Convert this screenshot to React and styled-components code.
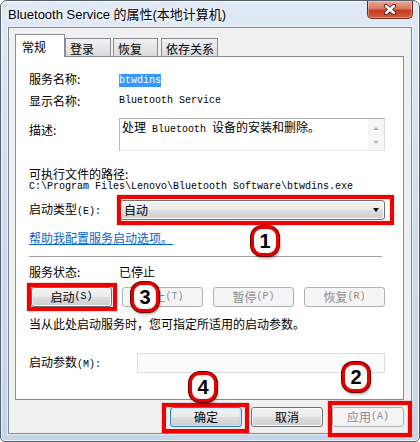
import React from 'react'
import styled, { createGlobalStyle } from 'styled-components'

const GlobalStyle = createGlobalStyle`
  body {
    margin: 0;
    background: #fff;
  }
`

const Page = styled.div`
  position: relative;
  width: 420px;
  height: 442px;
  font-family: "Noto Sans CJK SC", "Liberation Sans", sans-serif;
  font-size: 12px;
  color: #000;
`

const Window = styled.div`
  box-sizing: border-box;
  width: 420px;
  height: 442px;
  display: flex;
  flex-direction: column;
  border: 1px solid #56616d;
  border-radius: 7px 7px 5px 5px;
  background: linear-gradient(180deg, #e0eaf5 0%, #d2e0ef 35%, #c5d6e9 100%);
  box-shadow: inset 0 0 0 1px rgba(255, 255, 255, 0.7);
`

const TitleBar = styled.div`
  height: 26px;
  flex: none;
  display: flex;
  justify-content: space-between;
  align-items: flex-start;
  padding: 0 6px 0 7px;
`

const Title = styled.span`
  font-family: "Liberation Sans", "Noto Sans CJK SC", sans-serif;
  font-size: 13px;
  line-height: 26px;
  padding-top: 1px;
  text-shadow: 0 0 6px #fff, 0 0 3px #fff;
`

const CloseButton = styled.div`
  box-sizing: border-box;
  width: 46px;
  height: 18px;
  border: 1px solid #6b2a1f;
  border-top: none;
  border-radius: 0 0 5px 5px;
  background: linear-gradient(180deg, #eaa795 0%, #da765f 45%, #c33a1d 55%, #d35c3d 100%);
  box-shadow: inset 0 0 0 1px rgba(255, 255, 255, 0.35);
  display: flex;
  align-items: center;
  justify-content: center;
`

const Client = styled.div`
  flex: 1;
  margin: 0 7px 7px;
  border: 1px solid #7d8995;
  background: #f0f0f0;
  padding: 6px 7px 6px 6px;
  display: flex;
  flex-direction: column;
  box-shadow: 0 0 0 1px rgba(255, 255, 255, 0.55);
`

const TabStrip = styled.div`
  display: flex;
  align-items: flex-end;
  height: 22px;
  flex: none;
`

const Tab = styled.div`
  box-sizing: border-box;
  position: relative;
  z-index: ${p => (p.$active ? 1 : 0)};
  width: ${p => p.$w}px;
  margin-left: ${p => p.$gap || 0}px;
  height: ${p => (p.$active ? 23 : 18)}px;
  margin-bottom: ${p => (p.$active ? -1 : 0)}px;
  border: 1px solid #898c95;
  border-bottom: none;
  padding: ${p => (p.$active ? '0 0 0 6px' : '2px 0 0 4px')};
  display: flex;
  align-items: center;
  background: ${p => (p.$active ? '#fff' : 'linear-gradient(180deg, #f2f2f2 0%, #e6e6e6 50%, #dadada 100%)')};
`

const Panel = styled.div`
  flex: 1;
  border: 1px solid #898c95;
  background: #fff;
  padding: 13px 18px 0 13px;
  display: flex;
  flex-direction: column;
`

const Row = styled.div`
  display: grid;
  grid-template-columns: ${p => p.$label || 90}px 1fr;
  align-items: ${p => p.$align || 'center'};
  margin-top: ${p => p.$top || 0}px;
  line-height: 16px;
`

const Label = styled.span`
  padding-top: ${p => p.$pad || 0}px;
`

const Latin = styled.span`
  font-family: "Liberation Mono", monospace;
  font-size: 10px;
  white-space: pre;
`

const Selected = styled(Latin)`
  display: inline-block;
  background: #3399ff;
  color: #fff;
  line-height: 13px;
`

const Text = styled.div`
  margin-top: ${p => p.$top || 0}px;
  line-height: ${p => p.$line || 16}px;
`

const PathText = styled.div`
  font-family: "Liberation Mono", monospace;
  font-size: 10px;
  line-height: 11px;
`

const TextBox = styled.div`
  box-sizing: border-box;
  height: 33px;
  display: flex;
  border: 1px solid #abadb3;
  border-color: #abadb3 #dbdfe6 #e3e9ef #b5b8c0;
  background: #fff;
`

const TextBoxBody = styled.div`
  flex: 1;
  padding: 0 2px;
`

const ScrollBar = styled.div`
  width: 16px;
  background: #f6f6f6;
  display: flex;
  flex-direction: column;
  align-items: center;
  justify-content: space-between;
  padding: 8px 0 6px;
  box-sizing: border-box;
`

const Arrow = styled.span`
  width: 0;
  height: 0;
  border-left: ${p => p.$size || 3}px solid transparent;
  border-right: ${p => p.$size || 3}px solid transparent;
  ${p => (p.$up ? 'border-bottom' : 'border-top')}: ${p => (p.$size ? p.$size + 1 : 3)}px solid ${p => p.$color || '#b4b4b4'};
`

const ComboBox = styled.div`
  box-sizing: border-box;
  height: 20px;
  margin-left: 1px;
  border: 1px solid #707070;
  border-radius: 3px;
  background: linear-gradient(180deg, #f2f2f2 0%, #ebebeb 49%, #dddddd 50%, #cfcfcf 100%);
  box-shadow: inset 0 0 0 1px #fafafa;
  display: flex;
  align-items: center;
  justify-content: space-between;
  padding: 0 5px 0 3px;
`

const Link = styled.div`
  margin-top: 10px;
  line-height: 16px;
  color: #0066cc;
  text-decoration: underline;
`

const Separator = styled.div`
  margin-top: 10px;
  height: 1px;
  margin-right: 3px;
  background: #a0a0a0;
`

const ButtonRow = styled.div`
  display: grid;
  grid-template-columns: repeat(4, 81px);
  gap: 10px;
  padding-left: 2px;
  margin-top: 7px;
`

const Button = styled.div`
  box-sizing: border-box;
  height: 20px;
  border: 1px solid ${p => (p.$disabled ? '#adb2b5' : p.$primary ? '#3c7fb1' : '#707070')};
  border-radius: 3px;
  background: ${p => (p.$disabled ? '#f4f4f4' : 'linear-gradient(180deg, #f2f2f2 0%, #ebebeb 49%, #dddddd 50%, #cfcfcf 100%)')};
  box-shadow: ${p => (p.$disabled ? 'none' : p.$primary ? 'inset 0 0 0 1px #bfe6fa, inset 0 0 3px #8fd0f0' : 'inset 0 0 0 1px #fcfcfc')};
  color: ${p => (p.$disabled ? '#8d8d8d' : '#000')};
  display: flex;
  align-items: center;
  justify-content: center;
  line-height: 16px;
`

const InputBox = styled.div`
  box-sizing: border-box;
  height: 20px;
  border: 1px solid #d8dde2;
  background: #fbfbfb;
`

const Footer = styled.div`
  display: flex;
  justify-content: flex-end;
  gap: 9px;
  margin-top: 7px;
  flex: none;
`

const FooterButton = styled(Button)`
  width: 72px;
`

const RedBox = styled.div`
  position: absolute;
  box-sizing: border-box;
  left: ${p => p.$x}px;
  top: ${p => p.$y}px;
  width: ${p => p.$w}px;
  height: ${p => p.$h}px;
  border: 4px solid #f00000;
  box-shadow: 0 0 1px rgba(90, 0, 0, 0.7), inset 0 0 1px rgba(90, 0, 0, 0.7);
  pointer-events: none;
`

const Badge = styled.div`
  position: absolute;
  box-sizing: border-box;
  left: ${p => p.$x}px;
  top: ${p => p.$y}px;
  width: 28px;
  height: 30px;
  border: 3px solid #e80000;
  border-radius: 11px;
  background: #fff;
  box-shadow: 0 0 0 1px #6a0000, 1px 2px 3px rgba(0, 0, 0, 0.45);
  font-family: "Liberation Sans", sans-serif;
  font-weight: bold;
  font-size: 20px;
  display: flex;
  align-items: center;
  justify-content: center;
`

const tabs = [
  { name: '常规', w: 50, active: true },
  { name: '登录', w: 46 },
  { name: '恢复', w: 45, gap: 2 },
  { name: '依存关系', w: 57, gap: 3 },
]

const serviceButtons = [
  { name: '启动', key: 'S' },
  { name: '停止', key: 'T', disabled: true },
  { name: '暂停', key: 'P', disabled: true },
  { name: '恢复', key: 'R', disabled: true },
]

const App = () => {
  return (
    <Page>
      <GlobalStyle />
      <Window>
        <TitleBar>
          <Title>Bluetooth Service 的属性(本地计算机)</Title>
          <CloseButton>
            <svg width="14" height="11" viewBox="0 0 14 11">
              <path d="M3 2 L11 9 M11 2 L3 9" stroke="#4a2018" strokeWidth="4.2" strokeLinecap="round" />
              <path d="M3 2 L11 9 M11 2 L3 9" stroke="#fff" strokeWidth="2.4" strokeLinecap="round" />
            </svg>
          </CloseButton>
        </TitleBar>
        <Client>
          <TabStrip>
            {tabs.map(t => (
              <Tab key={t.name} $w={t.w} $gap={t.gap} $active={t.active}>
                {t.name}
              </Tab>
            ))}
          </TabStrip>
          <Panel>
            <Row>
              <Label>服务名称:</Label>
              <span>
                <Selected>btwdins</Selected>
              </span>
            </Row>
            <Row $top={6}>
              <Label>显示名称:</Label>
              <Latin>Bluetooth Service</Latin>
            </Row>
            <Row $top={9} $align="start">
              <Label $pad={4}>描述:</Label>
              <TextBox>
                <TextBoxBody>
                  处理<Latin> Bluetooth </Latin>设备的安装和删除。
                </TextBoxBody>
                <ScrollBar>
                  <Arrow $up />
                  <Arrow />
                </ScrollBar>
              </TextBox>
            </Row>
            <Text $top={16} $line={14}>可执行文件的路径:</Text>
            <PathText>C:\Program Files\Lenovo\Bluetooth Software\btwdins.exe</PathText>
            <Row $top={8}>
              <Label>启动类型<Latin>(E):</Latin></Label>
              <ComboBox>
                <span>自动</span>
                <Arrow $size={3.5} $color="#000" />
              </ComboBox>
            </Row>
            <Link>帮助我配置服务启动选项。</Link>
            <Separator />
            <Row $top={7}>
              <Label>服务状态:</Label>
              <span>已停止</span>
            </Row>
            <ButtonRow>
              {serviceButtons.map(b => (
                <Button key={b.key} $disabled={b.disabled}>
                  {b.name}<Latin>({b.key})</Latin>
                </Button>
              ))}
            </ButtonRow>
            <Text $top={9}>当从此处启动服务时，您可指定所适用的启动参数。</Text>
            <Row $top={21} $label={108}>
              <Label>启动参数<Latin>(M):</Latin></Label>
              <InputBox />
            </Row>
          </Panel>
          <Footer>
            <FooterButton $primary>确定</FooterButton>
            <FooterButton>取消</FooterButton>
            <FooterButton $disabled>应用<Latin>(A)</Latin></FooterButton>
          </Footer>
        </Client>
      </Window>

      <RedBox $x={117} $y={195} $w={277} $h={30} />
      <RedBox $x={27} $y={283} $w={90} $h={28} />
      <RedBox $x={162} $y={403} $w={87} $h={30} />
      <RedBox $x={328} $y={401} $w={84} $h={36} />

      <Badge $x={251} $y={226}>1</Badge>
      <Badge $x={342} $y={362}>2</Badge>
      <Badge $x={131} $y={282}>3</Badge>
      <Badge $x={189} $y={372}>4</Badge>
    </Page>
  )
}

export default App
